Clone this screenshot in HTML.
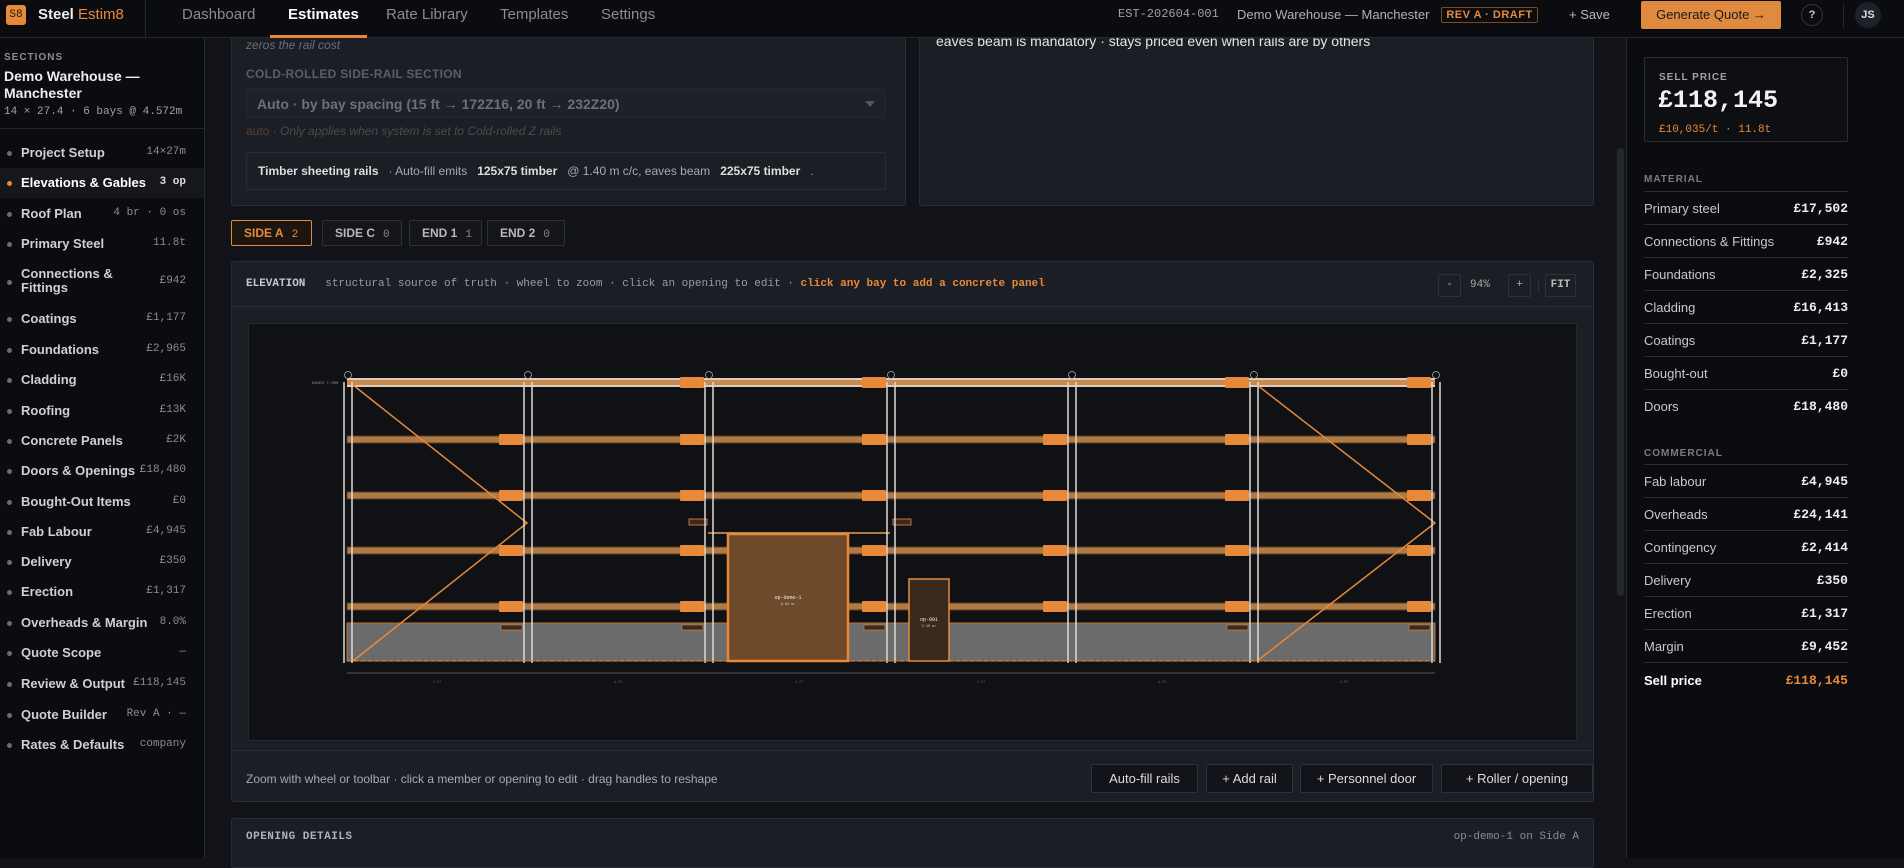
<!DOCTYPE html>
<html><head><meta charset="utf-8">
<style>
*{box-sizing:border-box;margin:0;padding:0}
body{width:1904px;height:858px;overflow:hidden;background:#111318;font-family:"Liberation Sans",sans-serif;color:#d8d8d8;position:relative}
.abs{position:absolute}
.mono{font-family:"Liberation Mono",monospace}
#top{left:0;top:0;width:1904px;height:38px;background:#0b0c10;border-bottom:1px solid #262830;z-index:20}
#side{left:0;top:38px;width:205px;height:820px;background:#0b0c10;border-right:1px solid #262830}
#right{left:1626px;top:38px;width:278px;height:820px;background:#0b0c10;border-left:1px solid #262830}
.nav{top:0;height:38px;line-height:29px;font-size:15px;color:#8a8c92}
.item{left:0;width:204px;height:30px;font-size:13px;color:#cfd0d2;font-weight:bold}
.item .d{position:absolute;left:7px;top:13px;width:5px;height:5px;border-radius:50%;background:#6a6c72}
.item .t{position:absolute;left:21px;top:7px}
.item .v{position:absolute;right:18px;top:8px;font-family:"Liberation Mono",monospace;font-size:11px;color:#8a8c92;font-weight:normal}
.card{background:#1b1e25;border:1px solid #2a2d35;border-radius:3px}
.row{left:1644px;width:204px;height:33px;border-bottom:1px solid #2a2c33;font-size:13px;color:#c8c9cc}
.row .l{position:absolute;left:0;top:9px}
.row .r{position:absolute;right:0;top:9px;font-family:"Liberation Mono",monospace;color:#eee;font-weight:bold;font-size:13px}
.tab{top:220px;height:26px;border:1px solid #2e3139;border-radius:2px;font-size:12px;font-weight:bold;color:#b8b9bc;line-height:24px;padding-left:12px;background:#14161b}
.tab span{font-family:"Liberation Mono",monospace;font-weight:normal;color:#888;margin-left:8px;font-size:11px}
.btn{top:764px;height:29px;border:1px solid #2e3139;border-radius:2px;font-size:13px;color:#ddd;text-align:center;line-height:27px;background:#121419}
</style></head><body>

<div id="top" class="abs">
  <div class="abs" style="left:6px;top:5px;width:20px;height:20px;background:#e8893a;border-radius:3px;color:#1a1a1a;font-size:11px;font-family:'Liberation Mono',monospace;text-align:center;line-height:20px">S8</div>
  <div class="abs" style="left:38px;top:6px;font-size:15px;font-weight:bold;color:#eee">Steel <span style="color:#e8893a;font-weight:normal">Estim8</span></div>
  <div class="abs" style="left:145px;top:0;width:1px;height:38px;background:#262830"></div>
  <div class="abs nav" style="left:182px">Dashboard</div>
  <div class="abs nav" style="left:288px;color:#fff;font-weight:bold">Estimates</div>
  <div class="abs" style="left:270px;top:35px;width:97px;height:3px;background:#e8893a"></div>
  <div class="abs nav" style="left:386px">Rate Library</div>
  <div class="abs nav" style="left:500px">Templates</div>
  <div class="abs nav" style="left:601px">Settings</div>
  <div class="abs mono" style="left:1118px;top:7px;font-size:12px;color:#a0a2a6">EST-202604-001</div>
  <div class="abs" style="left:1237px;top:7px;font-size:13px;color:#b0b2b6">Demo Warehouse — Manchester</div>
  <div class="abs" style="left:1441px;top:7px;width:97px;height:16px;border:1px solid #7a4a25;border-radius:2px;font-size:11px;color:#e8893a;text-align:center;line-height:14px;font-weight:bold;letter-spacing:.5px">REV A · DRAFT</div>
  <div class="abs" style="left:1569px;top:7px;font-size:13px;color:#b8b9bc">+ Save</div>
  <div class="abs" style="left:1641px;top:1px;width:140px;height:28px;background:#e08a40;border-radius:2px;color:#1a1a1a;font-size:13px;text-align:center;line-height:28px">Generate Quote →</div>
  <div class="abs" style="left:1801px;top:4px;width:22px;height:22px;border:1px solid #33363e;border-radius:50%;font-size:11px;text-align:center;line-height:20px;color:#ccc;font-weight:bold">?</div>
  <div class="abs" style="left:1843px;top:3px;width:1px;height:25px;background:#262830"></div>
  <div class="abs" style="left:1855px;top:2px;width:26px;height:26px;background:#1e2129;border-radius:50%;font-size:11px;text-align:center;line-height:26px;color:#ddd;font-weight:bold">JS</div>
</div>

<div id="side" class="abs">
  <div class="abs" style="left:4px;top:14px;font-size:10px;letter-spacing:1px;color:#8a8c92;font-weight:bold">SECTIONS</div>
  <div class="abs" style="left:4px;top:30px;font-size:14px;font-weight:bold;color:#eee;line-height:17px;width:190px">Demo Warehouse —<br>Manchester</div>
  <div class="abs mono" style="left:4px;top:68px;font-size:11px;color:#a0a2a6">14 × 27.4 · 6 bays @ 4.572m</div>
  <div class="abs" style="left:0;top:90px;width:204px;height:1px;background:#262830"></div>
</div>
<div class="abs item" style="top:138px"><i class="d"></i><span class="t">Project Setup</span><span class="v">14×27m</span></div>
<div class="abs item" style="top:168px;background:#15171c"><i class="d" style="background:#e8893a"></i><span class="t" style="color:#fff">Elevations &amp; Gables</span><span class="v" style="color:#ddd;font-weight:bold">3 op</span></div>
<div class="abs item" style="top:199px"><i class="d"></i><span class="t">Roof Plan</span><span class="v">4 br · 0 os</span></div>
<div class="abs item" style="top:229px"><i class="d"></i><span class="t">Primary Steel</span><span class="v">11.8t</span></div>
<div class="abs item" style="top:267px"><i class="d"></i><span class="t" style="top:0;line-height:14px">Connections &amp;<br>Fittings</span><span class="v">£942</span></div>
<div class="abs item" style="top:304px"><i class="d"></i><span class="t">Coatings</span><span class="v">£1,177</span></div>
<div class="abs item" style="top:335px"><i class="d"></i><span class="t">Foundations</span><span class="v">£2,965</span></div>
<div class="abs item" style="top:365px"><i class="d"></i><span class="t">Cladding</span><span class="v">£16K</span></div>
<div class="abs item" style="top:396px"><i class="d"></i><span class="t">Roofing</span><span class="v">£13K</span></div>
<div class="abs item" style="top:426px"><i class="d"></i><span class="t">Concrete Panels</span><span class="v">£2K</span></div>
<div class="abs item" style="top:456px"><i class="d"></i><span class="t">Doors &amp; Openings</span><span class="v">£18,480</span></div>
<div class="abs item" style="top:487px"><i class="d"></i><span class="t">Bought-Out Items</span><span class="v">£0</span></div>
<div class="abs item" style="top:517px"><i class="d"></i><span class="t">Fab Labour</span><span class="v">£4,945</span></div>
<div class="abs item" style="top:547px"><i class="d"></i><span class="t">Delivery</span><span class="v">£350</span></div>
<div class="abs item" style="top:577px"><i class="d"></i><span class="t">Erection</span><span class="v">£1,317</span></div>
<div class="abs item" style="top:608px"><i class="d"></i><span class="t">Overheads &amp; Margin</span><span class="v">8.0%</span></div>
<div class="abs item" style="top:638px"><i class="d"></i><span class="t">Quote Scope</span><span class="v">—</span></div>
<div class="abs item" style="top:669px"><i class="d"></i><span class="t">Review &amp; Output</span><span class="v">£118,145</span></div>
<div class="abs item" style="top:700px"><i class="d"></i><span class="t">Quote Builder</span><span class="v">Rev A · —</span></div>
<div class="abs item" style="top:730px"><i class="d"></i><span class="t">Rates &amp; Defaults</span><span class="v">company</span></div>

<div class="abs card" style="left:231px;top:20px;width:675px;height:186px;border-top:none;border-radius:0 0 3px 3px">
  <div class="abs" style="left:14px;top:18px;font-size:12px;font-style:italic;color:#6e7076">zeros the rail cost</div>
  <div class="abs" style="left:14px;top:47px;font-size:12px;font-weight:bold;color:#5c5e64;letter-spacing:.3px">COLD-ROLLED SIDE-RAIL SECTION</div>
  <div class="abs" style="left:14px;top:68px;width:640px;height:30px;background:#1e2128;border:1px solid #23262d;border-radius:2px">
    <div class="abs" style="left:10px;top:7px;font-size:14px;color:#6e7076;font-weight:bold">Auto · by bay spacing (15 ft → 172Z16, 20 ft → 232Z20)</div>
    <div class="abs" style="right:10px;top:12px;width:0;height:0;border-left:5px solid transparent;border-right:5px solid transparent;border-top:6px solid #55575d"></div>
  </div>
  <div class="abs" style="left:14px;top:104px;font-size:12px;color:#4e4a48"><span style="color:#5a4030">auto</span> · <i>Only applies when system is set to Cold-rolled Z rails</i></div>
  <div class="abs" style="left:14px;top:132px;width:640px;height:38px;border:1px solid #2a2d35;border-radius:2px;font-size:12px;color:#a8a9ac;line-height:36px;padding-left:11px">
    <b style="color:#ddd">Timber sheeting rails</b>&nbsp;&nbsp; · Auto-fill emits &nbsp;&nbsp;<b style="color:#ddd">125x75 timber</b>&nbsp;&nbsp; @ 1.40 m c/c, eaves beam &nbsp;&nbsp;<b style="color:#ddd">225x75 timber</b>&nbsp;&nbsp; .
  </div>
</div>
<div class="abs card" style="left:919px;top:20px;width:675px;height:186px;border-top:none;border-radius:0 0 3px 3px">
  <div class="abs" style="left:16px;top:13px;font-size:14px;color:#e6e6e6">eaves beam is mandatory · stays priced even when rails are by others</div>
</div>

<div class="abs tab" style="left:231px;width:81px;border-color:#e8893a;color:#e8893a;background:#1b1612">SIDE A<span style="color:#e8893a">2</span></div>
<div class="abs tab" style="left:322px;width:80px">SIDE C<span>0</span></div>
<div class="abs tab" style="left:409px;width:73px">END 1<span>1</span></div>
<div class="abs tab" style="left:487px;width:78px">END 2<span>0</span></div>

<div class="abs card" style="left:231px;top:261px;width:1363px;height:541px">
  <div class="abs" style="left:0;top:44px;width:1361px;height:1px;background:#2a2d35"></div>
  <div class="abs mono" style="left:14px;top:16px;font-size:11px;color:#9a9ca0"><b style="color:#c8c9cc">ELEVATION</b>&nbsp;&nbsp; structural source of truth · wheel to zoom · click an opening to edit · <b style="color:#e8893a">click any bay to add a concrete panel</b></div>
  <div class="abs mono" style="left:1206px;top:12px;width:23px;height:23px;border:1px solid #2e3139;border-radius:2px;font-size:11px;text-align:center;line-height:21px;color:#aaa">-</div>
  <div class="abs mono" style="left:1238px;top:17px;font-size:11px;color:#aaa">94%</div>
  <div class="abs mono" style="left:1276px;top:12px;width:23px;height:23px;border:1px solid #2e3139;border-radius:2px;font-size:11px;text-align:center;line-height:21px;color:#aaa">+</div>
  <div class="abs" style="left:1306px;top:17px;width:1px;height:13px;background:#2e3139"></div>
  <div class="abs mono" style="left:1313px;top:12px;width:31px;height:23px;border:1px solid #2e3139;border-radius:2px;font-size:11px;text-align:center;line-height:21px;color:#bbb;font-weight:bold">FIT</div>
  <div class="abs" style="left:0;top:488px;width:1361px;height:1px;background:#2a2d35"></div>
  <div class="abs" style="left:14px;top:510px;font-size:12px;color:#a8a9ac">Zoom with wheel or toolbar · click a member or opening to edit · drag handles to reshape</div>
</div>
<div class="abs btn" style="left:1091px;width:107px">Auto-fill rails</div>
<div class="abs btn" style="left:1206px;width:87px">+ Add rail</div>
<div class="abs btn" style="left:1300px;width:133px">+ Personnel door</div>
<div class="abs btn" style="left:1441px;width:152px">+ Roller / opening</div>

<div class="abs" style="left:248px;top:323px;width:1329px;height:418px;background:#0f1115;border:1px solid #262930;border-radius:2px;overflow:hidden">
<svg width="1329" height="418" style="position:absolute;left:0;top:0">
<g transform="translate(-248,-323)" font-family="Liberation Mono,monospace">
  <rect x="346" y="622" width="1088" height="38" fill="#6b6b6b" stroke="#b8702f" stroke-width="1"/>
  <g fill="#b07a45" stroke="#5a3a1e" stroke-width="1">
    <rect x="346" y="435" width="1088" height="7"/>
    <rect x="346" y="491" width="1088" height="7"/>
    <rect x="346" y="546" width="1088" height="7"/>
    <rect x="346" y="602" width="1088" height="7"/>
  </g>
  <rect x="346" y="377" width="1088" height="9" fill="#c88a50"/>
  <line x1="346" y1="378" x2="1434" y2="378" stroke="#e8e2d8" stroke-width="1.5"/>
  <line x1="346" y1="385" x2="1434" y2="385" stroke="#e8e2d8" stroke-width="1.5"/>
  <line x1="707" y1="532" x2="889" y2="532" stroke="#b07a45" stroke-width="2"/>
  <rect x="727" y="533" width="120" height="127" fill="#6f4a2a" stroke="#e8893a" stroke-width="2.5"/>
  <text x="787" y="598" font-size="5" fill="#eee" text-anchor="middle">op-demo-1</text>
  <text x="787" y="604" font-size="3.5" fill="#ccc" text-anchor="middle">9.60 m²</text>
  <rect x="908" y="578" width="40" height="82" fill="#3a2a1e" stroke="#e8893a" stroke-width="1.5"/>
  <text x="928" y="620" font-size="5" fill="#eee" text-anchor="middle">op-001</text>
  <text x="928" y="626" font-size="3.5" fill="#ccc" text-anchor="middle">2.10 m²</text>
  <rect x="688" y="518" width="18" height="6" fill="#3a2a1e" stroke="#e8893a" stroke-width=".8"/>
  <rect x="892" y="518" width="18" height="6" fill="#3a2a1e" stroke="#e8893a" stroke-width=".8"/>
  <polyline points="352,384 526,522 352,660" fill="none" stroke="#e8893a" stroke-width="1.5"/>
  <polyline points="1256,384 1434,522 1256,660" fill="none" stroke="#e8893a" stroke-width="1.5"/>
  <g stroke="#dedad4" stroke-width="1.5">
    <line x1="343" y1="381" x2="343" y2="662"/><line x1="351" y1="381" x2="351" y2="662"/>
    <line x1="523" y1="381" x2="523" y2="662"/><line x1="531" y1="381" x2="531" y2="662"/>
    <line x1="704" y1="381" x2="704" y2="662"/><line x1="712" y1="381" x2="712" y2="662"/>
    <line x1="886" y1="381" x2="886" y2="662"/><line x1="894" y1="381" x2="894" y2="662"/>
    <line x1="1067" y1="381" x2="1067" y2="662"/><line x1="1075" y1="381" x2="1075" y2="662"/>
    <line x1="1249" y1="381" x2="1249" y2="662"/><line x1="1257" y1="381" x2="1257" y2="662"/>
    <line x1="1431" y1="381" x2="1431" y2="662"/><line x1="1439" y1="381" x2="1439" y2="662"/>
  </g>
  <g fill="#0f1115" stroke="#aaa" stroke-width=".8">
    <circle cx="347" cy="374" r="3.5"/><circle cx="527" cy="374" r="3.5"/><circle cx="708" cy="374" r="3.5"/><circle cx="890" cy="374" r="3.5"/><circle cx="1071" cy="374" r="3.5"/><circle cx="1253" cy="374" r="3.5"/><circle cx="1435" cy="374" r="3.5"/>
  </g>
  <text x="311" y="383" font-size="4" fill="#999">EAVES 7.000</text>
  <line x1="346" y1="660" x2="1434" y2="660" stroke="#e8893a" stroke-width="1" stroke-dasharray="4 3"/>
  <line x1="346" y1="672" x2="1434" y2="672" stroke="#555" stroke-width="1"/>
  <g font-size="3.5" fill="#666" text-anchor="middle">
    <text x="436" y="682">4.57</text><text x="617" y="682">4.57</text><text x="798" y="682">4.57</text><text x="980" y="682">4.57</text><text x="1161" y="682">4.57</text><text x="1343" y="682">4.57</text>
  </g>
  <g fill="#e8893a">
    <rect x="498" y="433" width="24" height="11" rx="1"/><rect x="679" y="433" width="24" height="11" rx="1"/><rect x="861" y="433" width="24" height="11" rx="1"/><rect x="1042" y="433" width="24" height="11" rx="1"/><rect x="1224" y="433" width="24" height="11" rx="1"/><rect x="1406" y="433" width="24" height="11" rx="1"/>
    <rect x="498" y="489" width="24" height="11" rx="1"/><rect x="679" y="489" width="24" height="11" rx="1"/><rect x="861" y="489" width="24" height="11" rx="1"/><rect x="1042" y="489" width="24" height="11" rx="1"/><rect x="1224" y="489" width="24" height="11" rx="1"/><rect x="1406" y="489" width="24" height="11" rx="1"/>
    <rect x="498" y="544" width="24" height="11" rx="1"/><rect x="679" y="544" width="24" height="11" rx="1"/><rect x="861" y="544" width="24" height="11" rx="1"/><rect x="1042" y="544" width="24" height="11" rx="1"/><rect x="1224" y="544" width="24" height="11" rx="1"/><rect x="1406" y="544" width="24" height="11" rx="1"/>
    <rect x="498" y="600" width="24" height="11" rx="1"/><rect x="679" y="600" width="24" height="11" rx="1"/><rect x="861" y="600" width="24" height="11" rx="1"/><rect x="1042" y="600" width="24" height="11" rx="1"/><rect x="1224" y="600" width="24" height="11" rx="1"/><rect x="1406" y="600" width="24" height="11" rx="1"/>
    <rect x="679" y="376" width="24" height="11" rx="1"/><rect x="861" y="376" width="24" height="11" rx="1"/><rect x="1224" y="376" width="24" height="11" rx="1"/><rect x="1406" y="376" width="24" height="11" rx="1"/>
  </g>
  <g fill="#3a2a1e" stroke="#e8893a" stroke-width=".6">
    <rect x="500" y="624" width="21" height="5"/><rect x="681" y="624" width="21" height="5"/><rect x="863" y="624" width="21" height="5"/><rect x="1226" y="624" width="21" height="5"/><rect x="1408" y="624" width="21" height="5"/>
  </g>
</g>
</svg>
</div>

<div class="abs card" style="left:231px;top:818px;width:1363px;height:50px">
  <div class="abs mono" style="left:14px;top:12px;font-size:11px;font-weight:bold;color:#b0b2b6;letter-spacing:.5px">OPENING DETAILS</div>
  <div class="abs mono" style="right:14px;top:12px;font-size:11px;color:#8a8c92">op-demo-1 on Side A</div>
</div>

<div class="abs" style="left:1617px;top:148px;width:7px;height:448px;background:#23262d;border-radius:3px"></div>

<div id="right" class="abs"></div>
<div class="abs" style="left:1644px;top:57px;width:204px;height:85px;border:1px solid #2a2c33;border-radius:2px;background:#0e0f13">
  <div class="abs" style="left:14px;top:14px;font-size:10px;font-weight:bold;letter-spacing:1px;color:#a0a2a6">SELL PRICE</div>
  <div class="abs mono" style="left:13px;top:28px;font-size:25px;font-weight:bold;color:#f2f2f2">£118,145</div>
  <div class="abs mono" style="left:14px;top:66px;font-size:11px;color:#e8893a">£10,035/t · 11.8t</div>
</div>
<div class="abs" style="left:1644px;top:174px;width:204px;height:18px;border-bottom:1px solid #2a2c33;font-size:10px;font-weight:bold;letter-spacing:1px;color:#7a7c82">MATERIAL</div>
<div class="abs row" style="top:192px"><span class="l">Primary steel</span><span class="r">£17,502</span></div>
<div class="abs row" style="top:225px"><span class="l">Connections &amp; Fittings</span><span class="r">£942</span></div>
<div class="abs row" style="top:258px"><span class="l">Foundations</span><span class="r">£2,325</span></div>
<div class="abs row" style="top:291px"><span class="l">Cladding</span><span class="r">£16,413</span></div>
<div class="abs row" style="top:324px"><span class="l">Coatings</span><span class="r">£1,177</span></div>
<div class="abs row" style="top:357px"><span class="l">Bought-out</span><span class="r">£0</span></div>
<div class="abs row" style="top:390px;border-bottom:none"><span class="l">Doors</span><span class="r">£18,480</span></div>
<div class="abs" style="left:1644px;top:448px;width:204px;height:17px;border-bottom:1px solid #2a2c33;font-size:10px;font-weight:bold;letter-spacing:1px;color:#7a7c82">COMMERCIAL</div>
<div class="abs row" style="top:465px"><span class="l">Fab labour</span><span class="r">£4,945</span></div>
<div class="abs row" style="top:498px"><span class="l">Overheads</span><span class="r">£24,141</span></div>
<div class="abs row" style="top:531px"><span class="l">Contingency</span><span class="r">£2,414</span></div>
<div class="abs row" style="top:564px"><span class="l">Delivery</span><span class="r">£350</span></div>
<div class="abs row" style="top:597px"><span class="l">Erection</span><span class="r">£1,317</span></div>
<div class="abs row" style="top:630px"><span class="l">Margin</span><span class="r">£9,452</span></div>
<div class="abs row" style="top:664px;border-bottom:none"><span class="l" style="color:#fff;font-weight:bold">Sell price</span><span class="r" style="color:#e8893a">£118,145</span></div>

</body></html>
